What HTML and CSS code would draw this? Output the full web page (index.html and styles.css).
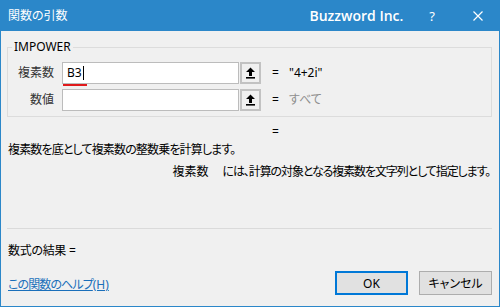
FILE: index.html
```html
<!DOCTYPE html>
<html lang="ja">
<head>
<meta charset="utf-8">
<title>関数の引数</title>
<link rel="stylesheet" href="styles.css">
</head>
<body>
<div class="window">
  <div class="titlebar">
    <span class="title">関数の引数</span>
    <span class="brand">Buzzword Inc.</span>
    <span class="help">?</span>
    <span class="close">
      <svg width="10" height="10" viewBox="0 0 10 10"><path d="M0.5 0.5 L9.5 9.5 M9.5 0.5 L0.5 9.5" stroke="#fff" stroke-width="1.2" fill="none"/></svg>
    </span>
  </div>
  <div class="content">
    <fieldset class="group">
      <legend class="group-title">IMPOWER</legend>
      <div class="arg-row">
        <span class="arg-label">複素数</span>
        <div class="arg-input typo"><span class="typed">B3</span><span class="caret"></span></div>
        <span class="ref-btn"><svg width="11" height="12" viewBox="0 0 11 12"><path d="M5.5 0.5 L10 5 L7 5 L7 9 L4 9 L4 5 L1 5 Z" fill="#000"/><rect x="1" y="10" width="9" height="1.6" fill="#000"/></svg></span>
        <span class="eq">=</span>
        <span class="arg-value">"4+2i"</span>
      </div>
      <div class="arg-row">
        <span class="arg-label">数値</span>
        <div class="arg-input"></div>
        <span class="ref-btn"><svg width="11" height="12" viewBox="0 0 11 12"><path d="M5.5 0.5 L10 5 L7 5 L7 9 L4 9 L4 5 L1 5 Z" fill="#000"/><rect x="1" y="10" width="9" height="1.6" fill="#000"/></svg></span>
        <span class="eq">=</span>
        <span class="arg-value muted">すべて</span>
      </div>
    </fieldset>
    <div class="total-eq">=</div>
    <div class="description">複素数を底として複素数の整数乗を計算します。</div>
    <div class="arg-help"><span class="arg-name">複素数</span><span class="arg-text">には、計算の対象となる複素数を文字列として指定します。</span></div>
    <div class="separator"></div>
    <div class="formula-result">数式の結果 =</div>
    <div class="footer">
      <a class="help-link" href="#"><span class="help-ja">この関数のヘルプ</span>(H)</a>
      <div class="buttons">
        <button class="btn btn-default">OK</button>
        <button class="btn">キャンセル</button>
      </div>
    </div>
  </div>
</div>
</body>
</html>
```

FILE: styles.css
```css
* { box-sizing: border-box; }
html, body { margin: 0; padding: 0; background: #f0f0f0; }
body {
  font-family: "Noto Sans", "Noto Sans CJK JP", sans-serif;
  font-size: 12px;
  line-height: 16px;
  color: #000;
  font-feature-settings: "palt";
}
.window {
  width: 500px;
  height: 307px;
  border: 1px solid #2b87c9;
  border-top: none;
  background: #f0f0f0;
  display: flex;
  flex-direction: column;
}
.titlebar {
  height: 31px;
  background: #2b87c9;
  color: #fff;
  display: flex;
  align-items: center;
  padding: 0 17px 0 8px;
  margin: 0 -1px;
}
.title { font-size: 12px; }
.brand {
  margin-left: auto;
  font-size: 14px;
  font-weight: 600;
  font-family: "Open Sans", "Noto Sans", sans-serif;
}
.help {
  margin-left: 26px;
  font-size: 13px;
  font-family: "Noto Sans", sans-serif;
}
.close { margin-left: 38px; display: flex; }

.content {
  flex: 1;
  padding: 0 7px 0 6px;
  display: flex;
  flex-direction: column;
}
.group {
  margin: 8px 0 0 0;
  padding: 7px 0 5px 0;
  border: 1px solid #dcdcdc;
  min-width: 0;
}
.group-title {
  padding: 0 2px;
  margin-left: 4px;
  font-size: 12px;
  line-height: 16px;
}
.arg-row {
  display: flex;
  align-items: center;
  height: 22px;
}
.arg-row + .arg-row { margin-top: 5px; }
.arg-label {
  width: 46px;
  text-align: right;
  color: #333;
}
.arg-input {
  margin-left: 8px;
  width: 177px;
  height: 22px;
  background: #fff;
  border: 1px solid #bcbcbc;
  display: flex;
  align-items: center;
  padding-left: 4px;
  position: relative;
}
.typo::after {
  content: "";
  position: absolute;
  left: 0;
  bottom: -3px;
  width: 24px;
  height: 2px;
  background: #e0191b;
}
.caret {
  display: inline-block;
  width: 1px;
  height: 14px;
  background: #000;
  margin-left: 1px;
}
.ref-btn {
  margin-left: 1px;
  width: 21px;
  height: 22px;
  background: #f0f0f0;
  border: 2px solid #c2c2c2;
  display: flex;
  align-items: center;
  justify-content: center;
}
.eq { margin-left: 11px; width: 17px; }
.arg-value { color: #000; }
.muted { color: #8e8e8e; }

.total-eq {
  margin-top: 7px;
  padding-left: 265px;
}
.description {
  margin-top: 2px;
  padding-left: 1px;
  letter-spacing: -0.85px;
}
.arg-help {
  margin-top: 6px;
  text-align: right;
  padding-right: 2px;
}
.arg-name { margin-right: 14px; }
.arg-text { letter-spacing: -1.1px; }
.separator {
  margin-top: 48px;
  height: 1px;
  background: #dadada;
}
.formula-result {
  margin-top: 14px;
  padding-left: 1px;
  letter-spacing: -0.3px;
}
.footer {
  margin-top: 12px;
  display: flex;
  align-items: center;
  justify-content: space-between;
  padding-left: 1px;
}
.help-link {
  color: #1a6fba;
  text-decoration: underline;
  margin-top: 3px;
  font-size: 12px;
}
.help-ja { letter-spacing: -0.9px; }
.buttons { display: flex; gap: 11px; }
.btn {
  width: 73px;
  height: 24px;
  font-family: "Noto Sans", "Noto Sans CJK JP", sans-serif;
  font-feature-settings: "palt";
  font-size: 12px;
  background: #e1e1e1;
  border: 1px solid #adadad;
  color: #000;
  padding: 0;
}
.btn-default {
  border: 2px solid #0078d7;
}
```
